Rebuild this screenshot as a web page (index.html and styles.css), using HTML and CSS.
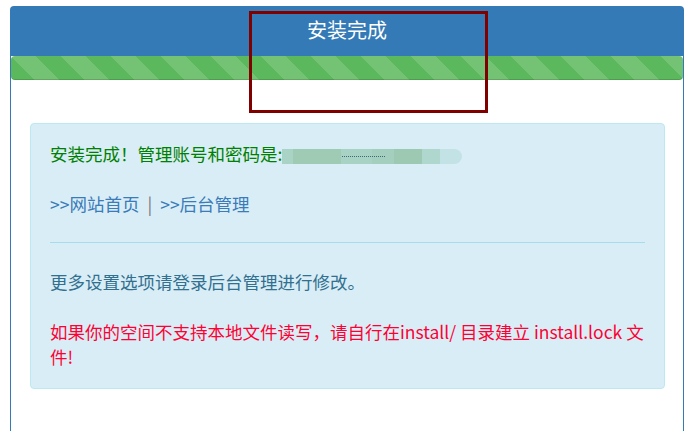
FILE: index.html
```html
<!DOCTYPE html>
<html lang="zh-CN">
<head>
<meta charset="utf-8">
<title>安装完成</title>
<link rel="stylesheet" href="styles.css">
</head>
<body>
<div class="panel">
  <div class="panel-heading">安装完成</div>
  <div class="progress"></div>
  <div class="panel-body">
    <div class="alert">
      <div class="line ok">安装完成！管理账号和密码是:<span class="blob"><span class="dots"></span></span></div>
      <div class="line blank"></div>
      <div class="line links"><a href="#">&gt;&gt;网站首页</a><span class="sep">|</span><a href="#">&gt;&gt;后台管理</a></div>
      <hr class="rule">
      <div class="line info">更多设置选项请登录后台管理进行修改。</div>
      <div class="line blank"></div>
      <div class="line warn">如果你的空间不支持本地文件读写，请自行在install/ 目录建立 install.lock 文件!</div>
    </div>
  </div>
</div>
<div class="mark"></div>
</body>
</html>
```
FILE: styles.css
```css
html, body {
  margin: 0;
  padding: 0;
  overflow: hidden;
  background: #fff;
}
body {
  font-family: "Noto Sans CJK SC", "Noto Sans", sans-serif;
  font-size: 17.5px;
  line-height: 25px;
}
.panel {
  box-sizing: border-box;
  margin: 6px 5px 0 10px;
  height: 425px;
  border: 1px solid #337ab7;
  border-bottom: 0;
  border-radius: 4px 4px 0 0;
}
.panel-heading {
  box-sizing: border-box;
  height: 49px;
  padding-bottom: 4px;
  background: #337ab7;
  color: #fff;
  font-size: 20px;
  display: flex;
  align-items: center;
  justify-content: center;
}
.progress {
  height: 24px;
  border-radius: 4px;
  background-color: #5cb85c;
  background-image: linear-gradient(45deg, rgba(255,255,255,.15) 25%, transparent 25%, transparent 50%, rgba(255,255,255,.15) 50%, rgba(255,255,255,.15) 75%, transparent 75%, transparent);
  background-size: 50px 50px;
  box-shadow: inset 0 -1px 0 rgba(0,0,0,.15);
}
.panel-body {
  padding: 43px 18px 0 19px;
}
.alert {
  background: #d9edf7;
  border: 1px solid #bce8f1;
  border-radius: 4px;
  padding: 17px 19px 19px 19px;
}
.line {
  min-height: 25px;
}
.ok { color: #008000; }
.info { color: #31708f; }
.warn { color: #ff0033; }
.links a {
  color: #3a7bb8;
  text-decoration: none;
}
.sep {
  color: #777;
  margin: 0 8px 0 8px;
}
.rule {
  border: 0;
  border-top: 1px solid #a6dcec;
  margin: 26px 0 26px 0;
  height: 0;
}
.blob {
  display: inline-block;
  box-sizing: border-box;
  width: 180px;
  height: 15px;
  margin-left: 0;
  vertical-align: middle;
  padding: 7px 0 0 60px;
  line-height: 0;
  border-radius: 0 8px 8px 0;
  background: linear-gradient(90deg, #a9d3c4 0 6%, #9fcbb5 6% 33%, #a8d2c4 33% 50%, #a4cfbf 50% 62%, #9dc9b3 62% 78%, #b0d7cd 78% 88%, #c3e2e6 88% 100%);
}
.dots {
  display: block;
  width: 43px;
  height: 0;
  border-top: 1px dotted #3a6a7a;
}
.mark {
  position: absolute;
  left: 249px;
  top: 11px;
  width: 233px;
  height: 96px;
  border: 3px solid #800000;
}
```
